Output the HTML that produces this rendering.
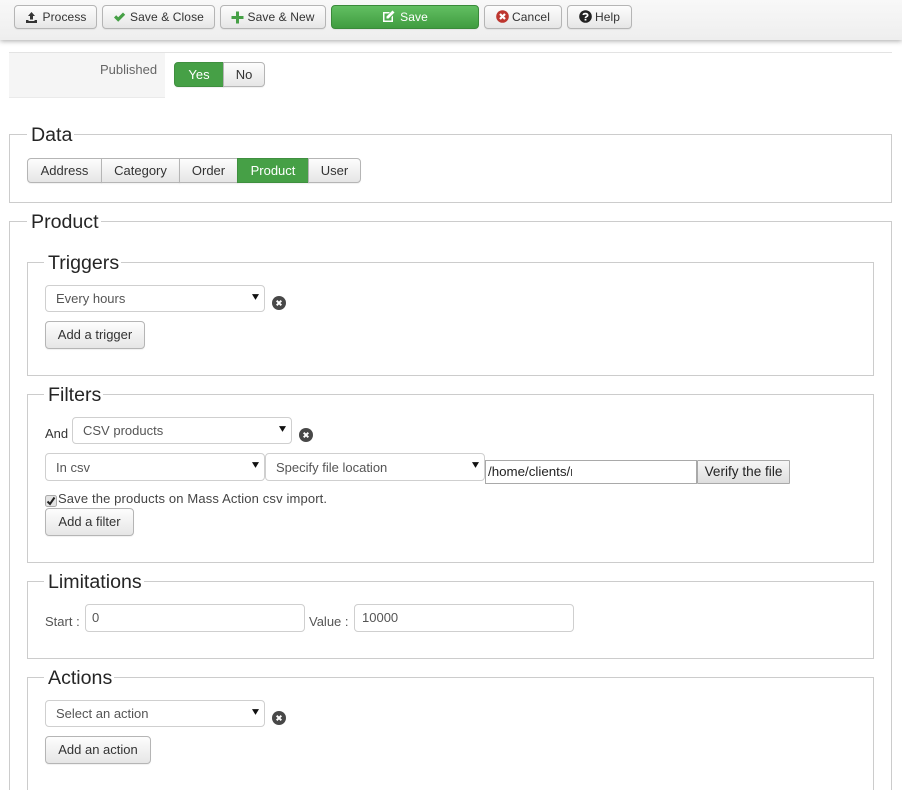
<!DOCTYPE html>
<html>
<head>
<meta charset="utf-8">
<style>
html,body{margin:0;padding:0;background:#fff;width:902px;height:790px;overflow:hidden;}
body{position:relative;font-family:"Liberation Sans",Arial,sans-serif;font-size:13px;color:#333;}
.a{position:absolute;box-sizing:border-box;white-space:nowrap;}
.tb{position:absolute;left:0;top:0;width:902px;height:40px;background:linear-gradient(#f8f8f8,#eeeeee);box-shadow:0 1px 5px rgba(0,0,0,.35);}
.btn{position:absolute;box-sizing:border-box;background:linear-gradient(#fdfdfd,#e6e6e6);border:1px solid #b5b5b5;border-radius:4px;text-align:center;color:#333;white-space:nowrap;box-shadow:0 1px 1px rgba(0,0,0,.06);}
.tool{top:5px;height:24px;line-height:22px;font-size:12px;letter-spacing:.1px;}
.tool svg{vertical-align:-2px;margin-right:4px;}
.green{background:linear-gradient(#62bf62,#409c40);border-color:#3a8a3a;color:#fff;}
.flat{background:#46a046;border-color:#3f8f3f;color:#fff;}
.fs{position:absolute;box-sizing:border-box;border:1px solid #cccccc;}
.lg{position:absolute;background:#fff;font-size:19.6px;line-height:24px;color:#252525;padding:0 2px 0 4px;white-space:nowrap;}
.sel,.inp{position:absolute;box-sizing:border-box;background:#fff;border:1px solid #cfcfcf;border-radius:4px;color:#555;padding-left:10px;white-space:nowrap;}
.arr{position:absolute;right:5px;top:8px;width:7px;height:6px;}
.ic{position:absolute;width:14px;height:14px;}
.add{height:28px;line-height:26px;font-size:13px;}
.tab{top:158px;height:25px;line-height:23px;border-radius:0;}
</style>
</head>
<body>

<!-- Data -->
<div class="fs" style="left:9px;top:134px;width:883px;height:69px;"></div>
<div class="lg" style="left:27px;top:123px;">Data</div>
<div class="btn tab" style="left:27px;width:75px;border-radius:4px 0 0 4px;">Address</div>
<div class="btn tab" style="left:101px;width:79px;">Category</div>
<div class="btn tab" style="left:179px;width:59px;">Order</div>
<div class="btn tab flat" style="left:237px;width:72px;">Product</div>
<div class="btn tab" style="left:308px;width:53px;border-radius:0 4px 4px 0;">User</div>

<!-- Product -->
<div class="fs" style="left:9px;top:221px;width:883px;height:569px;border-bottom:0;"></div>
<div class="lg" style="left:27px;top:210px;">Product</div>

<!-- Triggers -->
<div class="fs" style="left:27px;top:262px;width:847px;height:114px;"></div>
<div class="lg" style="left:44px;top:251px;">Triggers</div>
<div class="sel" style="left:45px;top:285px;width:220px;height:27px;line-height:25px;">Every hours<svg class="arr" viewBox="0 0 6 5"><path d="M0 0 H6 L3 5 Z" fill="#111"/></svg></div>
<svg class="ic" style="left:272px;top:296px;" viewBox="0 0 14 14"><circle cx="7" cy="7" r="7" fill="#484848"/><path d="M4.700 4.700 L9.300 9.300 M9.300 4.700 L4.700 9.300" stroke="#fff" stroke-width="2"/></svg>
<div class="btn add" style="left:45px;top:321px;width:100px;">Add a trigger</div>

<!-- Filters -->
<div class="fs" style="left:27px;top:394px;width:847px;height:169px;"></div>
<div class="lg" style="left:44px;top:383px;">Filters</div>
<div class="a" style="left:45px;top:426px;line-height:16px;">And</div>
<div class="sel" style="left:72px;top:417px;width:220px;height:27px;line-height:25px;">CSV products<svg class="arr" viewBox="0 0 6 5"><path d="M0 0 H6 L3 5 Z" fill="#111"/></svg></div>
<svg class="ic" style="left:299px;top:428px;" viewBox="0 0 14 14"><circle cx="7" cy="7" r="7" fill="#484848"/><path d="M4.700 4.700 L9.300 9.300 M9.300 4.700 L4.700 9.300" stroke="#fff" stroke-width="2"/></svg>
<div class="sel" style="left:45px;top:453px;width:220px;height:28px;line-height:27px;">In csv<svg class="arr" viewBox="0 0 6 5"><path d="M0 0 H6 L3 5 Z" fill="#111"/></svg></div>
<div class="sel" style="left:265px;top:453px;width:220px;height:28px;line-height:27px;">Specify file location<svg class="arr" viewBox="0 0 6 5"><path d="M0 0 H6 L3 5 Z" fill="#111"/></svg></div>
<div class="a" style="left:485px;top:460px;width:212px;height:24px;border:1px solid #a9a9a9;background:#fff;"></div>
<div class="a" style="left:488px;top:461px;width:84px;height:22px;line-height:21px;font-size:13.33px;color:#222;overflow:hidden;">/home/clients/r</div>
<div class="a" style="left:697px;top:460px;width:93px;height:24px;line-height:22px;border:1px solid #a9a9a9;background:linear-gradient(#f6f6f6,#dedede);text-align:center;font-size:13.6px;color:#222;border-radius:1px;">Verify the file</div>
<svg class="a" style="left:45px;top:495px;" width="12" height="12" viewBox="0 0 12 12"><rect x=".5" y=".5" width="11" height="11" rx="2" fill="#e3e3e3" stroke="#aaa"/><path d="M2.500 6.500 L5 9 L9.500 2.500" stroke="#222" stroke-width="2" fill="none"/></svg>
<div class="a" style="left:58px;top:491px;line-height:16px;letter-spacing:.14px;color:#444;">Save the products on Mass Action csv import.</div>
<div class="btn add" style="left:45px;top:508px;width:89px;">Add a filter</div>

<!-- Limitations -->
<div class="fs" style="left:27px;top:581px;width:847px;height:78px;"></div>
<div class="lg" style="left:44px;top:570px;">Limitations</div>
<div class="a" style="left:45px;top:614px;line-height:16px;color:#555;">Start :</div>
<div class="inp" style="left:85px;top:604px;width:220px;height:28px;line-height:25px;padding-left:6px;">0</div>
<div class="a" style="left:309px;top:614px;line-height:16px;color:#555;">Value :</div>
<div class="inp" style="left:354px;top:604px;width:220px;height:28px;line-height:25px;padding-left:7px;">10000</div>

<!-- Actions -->
<div class="fs" style="left:27px;top:677px;width:847px;height:113px;border-bottom:0;"></div>
<div class="lg" style="left:44px;top:666px;">Actions</div>
<div class="sel" style="left:45px;top:700px;width:220px;height:27px;line-height:25px;">Select an action<svg class="arr" viewBox="0 0 6 5"><path d="M0 0 H6 L3 5 Z" fill="#111"/></svg></div>
<svg class="ic" style="left:272px;top:711px;" viewBox="0 0 14 14"><circle cx="7" cy="7" r="7" fill="#484848"/><path d="M4.700 4.700 L9.300 9.300 M9.300 4.700 L4.700 9.300" stroke="#fff" stroke-width="2"/></svg>
<div class="btn add" style="left:45px;top:736px;width:106px;">Add an action</div>

<!-- Published -->
<div class="a" style="left:9px;top:52px;width:883px;height:1px;background:#e3e3e3;"></div>
<div class="a" style="left:9px;top:53px;width:156px;height:45px;background:#f5f5f5;border-bottom:1px solid #eaeaea;"></div>
<div class="a" style="left:100px;top:62px;line-height:16px;color:#666;">Published</div>
<div class="btn flat" style="left:174px;top:62px;width:50px;height:25px;line-height:23px;border-radius:4px 0 0 4px;">Yes</div>
<div class="btn" style="left:223px;top:62px;width:42px;height:25px;line-height:23px;border-radius:0 4px 4px 0;">No</div>

<!-- Toolbar -->
<div class="tb"></div>
<div class="btn tool" style="left:14px;width:83px;padding-left:1px;"><svg width="13" height="12" viewBox="0 0 13 12"><path d="M6.500 1 L10 5 H8 V8.500 H5 V5 H3 Z M1 9 H3.500 V10 H9.500 V9 H12 V12 H1 Z" fill="#333"/></svg>Process</div>
<div class="btn tool" style="left:102px;width:113px;"><svg width="13" height="12" viewBox="0 0 13 12"><path d="M1 6.500 L3.200 4.300 L5.200 6.300 L10 1.500 L12.200 3.700 L5.200 10.700 Z" fill="#46a046"/></svg>Save &amp; Close</div>
<div class="btn tool" style="left:220px;width:106px;"><svg width="13" height="13" viewBox="0 0 13 13" style="vertical-align:-3px;margin-right:3px"><path d="M5 .5 H8 V5 H12.500 V8 H8 V12.500 H5 V8 H.5 V5 H5 Z" fill="#46a046"/></svg>Save &amp; New</div>
<div class="btn tool green" style="left:331px;width:148px;"><svg width="13" height="13" viewBox="0 0 13 13" style="vertical-align:-2px;margin-right:5px"><path d="M1 2 H8 L6.500 3.500 H2.500 V10.500 H9.500 V7 L11 5.500 V12 H1 Z" fill="#fff"/><path d="M4.500 6.500 L10.500 .5 L12.500 2.500 L6.500 8.500 H4.500 Z" fill="#fff"/></svg>Save</div>
<div class="btn tool" style="left:484px;width:78px;"><svg width="13" height="13" viewBox="0 0 13 13" style="vertical-align:-2px;margin-right:3px"><circle cx="6.500" cy="6.500" r="6.300" fill="#bd362f"/><path d="M4 4 L9 9 M9 4 L4 9" stroke="#fff" stroke-width="2.200"/></svg>Cancel</div>
<div class="btn tool" style="left:567px;width:65px;"><svg width="13" height="13" viewBox="0 0 13 13" style="vertical-align:-2px;margin-right:3px"><circle cx="6.500" cy="6.500" r="6.300" fill="#222"/><path d="M4.300 5 C4.400 3.300 8.700 3 8.700 5.200 C8.700 6.600 6.500 6.500 6.500 8" stroke="#fff" stroke-width="1.700" fill="none"/><rect x="5.600" y="8.800" width="1.800" height="1.700" fill="#fff"/></svg>Help</div>
</body>
</html>
